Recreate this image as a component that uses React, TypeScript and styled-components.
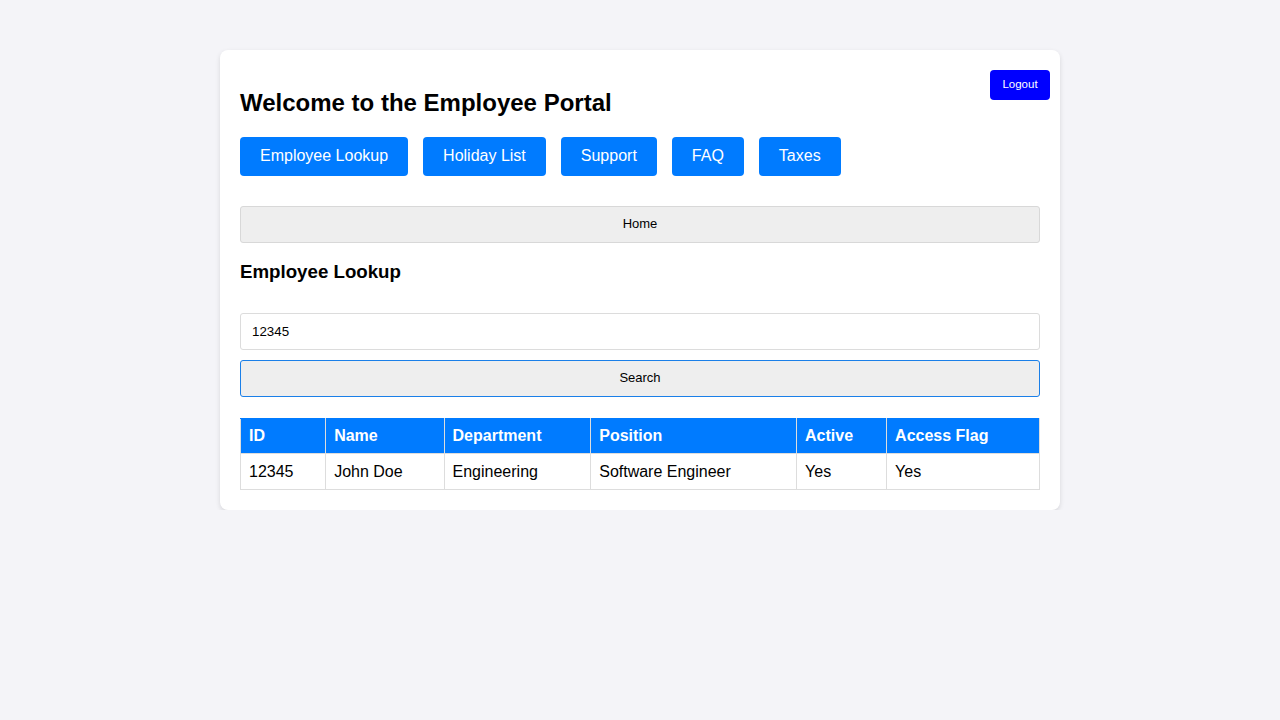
import React from "react";
import styled, { createGlobalStyle } from "styled-components";

const Global = createGlobalStyle`
  html, body { margin: 0; padding: 0; }
  body {
    background: #f4f4f8;
    font-family: "Liberation Sans", Arial, sans-serif;
    color: #000;
  }
`;

const Page = styled.div`
  display: flex;
  justify-content: center;
  padding-top: 50px;
`;

const Card = styled.div`
  position: relative;
  width: 800px;
  padding: 20px;
  background: #fff;
  border-radius: 8px;
  box-shadow: 0 2px 5px rgba(0, 0, 0, 0.12);
`;

const LogoutButton = styled.button`
  position: absolute;
  top: 20px;
  right: 10px;
  width: 60px;
  height: 30px;
  padding: 0 0 2px;
  background: #0000ff;
  color: #fff;
  border: none;
  border-radius: 4px;
  font-family: "Liberation Sans", Arial, sans-serif;
  font-size: 11.5px;
  cursor: pointer;
`;

const Title = styled.h2`
  font-size: 24px;
  font-weight: bold;
  margin: 19px 0 21px;
  line-height: 27px;
`;

const Nav = styled.div`
  display: flex;
  gap: 15px;
  margin-bottom: 30px;
`;

const NavButton = styled.button`
  height: 39px;
  padding: 0 20px 1px;
  background: #007bff;
  color: #fff;
  border: none;
  border-radius: 4px;
  font-family: "Liberation Sans", Arial, sans-serif;
  font-size: 16px;
  cursor: pointer;
`;

const WideButton = styled.button<{ $focused?: boolean }>`
  display: block;
  width: 100%;
  height: 37px;
  padding: 0 0 2px;
  background: #eeeeee;
  border: 1px solid ${(p) => (p.$focused ? "#1a7fe8" : "#d8d8d8")};
  border-radius: 3px;
  font-family: "Liberation Sans", Arial, sans-serif;
  font-size: 13px;
  color: #000;
  cursor: pointer;
`;

const SectionTitle = styled.h3`
  font-size: 18.7px;
  font-weight: bold;
  margin: 18px 0 30px;
  line-height: 22px;
`;

const Input = styled.input`
  display: block;
  box-sizing: border-box;
  width: 100%;
  height: 37px;
  padding: 0 11px 1px;
  border: 1px solid #dcdcdc;
  border-radius: 3px;
  font-family: "Liberation Sans", Arial, sans-serif;
  font-size: 13.33px;
  color: #000;
  margin-bottom: 10px;
`;

const Table = styled.table`
  width: 100%;
  border-collapse: collapse;
  margin-top: 21px;
  font-size: 16px;
`;

const Th = styled.th`
  background: #007bff;
  color: #fff;
  text-align: left;
  font-weight: bold;
  padding: 8px;
  height: 18px;
  border: 1px solid #dddddd;
  border-top-color: #007bff;
`;

const Td = styled.td`
  padding: 8px;
  height: 19px;
  border: 1px solid #dddddd;
`;

const headers = ["ID", "Name", "Department", "Position", "Active", "Access Flag"];
const row = ["12345", "John Doe", "Engineering", "Software Engineer", "Yes", "Yes"];
const navItems = ["Employee Lookup", "Holiday List", "Support", "FAQ", "Taxes"];

export default function App() {
  return (
    <>
      <Global />
      <Page>
        <Card>
          <LogoutButton>Logout</LogoutButton>
          <Title>Welcome to the Employee Portal</Title>
          <Nav>
            {navItems.map((n) => (
              <NavButton key={n}>{n}</NavButton>
            ))}
          </Nav>
          <WideButton>Home</WideButton>
          <SectionTitle>Employee Lookup</SectionTitle>
          <Input defaultValue="12345" />
          <WideButton $focused>Search</WideButton>
          <Table>
            <thead>
              <tr>
                {headers.map((h) => (
                  <Th key={h}>{h}</Th>
                ))}
              </tr>
            </thead>
            <tbody>
              <tr>
                {row.map((c, i) => (
                  <Td key={i}>{c}</Td>
                ))}
              </tr>
            </tbody>
          </Table>
        </Card>
      </Page>
    </>
  );
}
